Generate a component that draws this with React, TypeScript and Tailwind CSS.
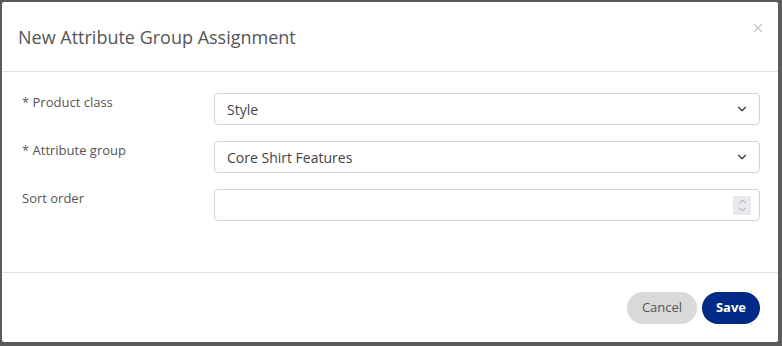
import { ChevronDown, ChevronUp, X } from "lucide-react"

const font = { fontFamily: '"Open Sans", sans-serif' }

function Field({ label, children }: { label: string; children: React.ReactNode }) {
  return (
    <div className="flex items-start">
      <label className="w-[192px] shrink-0 text-[13px] leading-[18px] text-[#555]">{label}</label>
      <div className="flex-1">{children}</div>
    </div>
  )
}

function SelectBox({ value }: { value: string }) {
  return (
    <div className="flex h-[32px] items-center justify-between rounded-[4px] border border-[#d4d4d4] bg-white pl-[12px] pr-[10px]">
      <span className="text-[14px] text-[#444]">{value}</span>
      <ChevronDown className="h-[14px] w-[14px] text-[#333]" strokeWidth={2} />
    </div>
  )
}

function NumberBox() {
  return (
    <div className="flex h-[32px] items-center justify-end rounded-[4px] border border-[#d4d4d4] bg-white pr-[8px]">
      <div className="flex h-[19px] w-[18px] flex-col items-center justify-center bg-[#e8e8ee]">
        <ChevronUp className="-mb-[3px] h-[11px] w-[11px] text-[#999]" strokeWidth={2} />
        <ChevronDown className="h-[11px] w-[11px] text-[#999]" strokeWidth={2} />
      </div>
    </div>
  )
}

export default function App() {
  return (
    <div className="h-[346px] w-[782px] bg-[#5c5c5c] pl-[2px] pr-[4px] pt-[2px] pb-[4px]" style={font}>
      <div className="flex h-full flex-col rounded-[2px] bg-white">
        <div className="flex h-[70px] items-start justify-between border-b border-[#e3e3e3] pl-[16px] pr-[13px]">
          <h1 className="pt-[22px] text-[18px] leading-[26px] text-[#555]">New Attribute Group Assignment</h1>
          <X className="mt-[19px] h-[14px] w-[14px] text-[#c4c4c4]" strokeWidth={2} />
        </div>
        <div className="flex h-[200px] flex-col gap-[16px] pl-[20px] pr-[18px] pt-[21px]">
          <Field label="* Product class">
            <SelectBox value="Style" />
          </Field>
          <Field label="* Attribute group">
            <SelectBox value="Core Shirt Features" />
          </Field>
          <Field label="Sort order">
            <NumberBox />
          </Field>
        </div>
        <div className="flex flex-1 items-center justify-end gap-[5px] border-t border-[#e3e3e3] pr-[18px]">
          <button className="h-[32px] w-[70px] rounded-full bg-[#d9d9d9] text-[13px] text-[#555]">Cancel</button>
          <button className="h-[32px] w-[58px] rounded-full bg-[#002a86] text-[13px] font-bold text-white">Save</button>
        </div>
      </div>
    </div>
  )
}
